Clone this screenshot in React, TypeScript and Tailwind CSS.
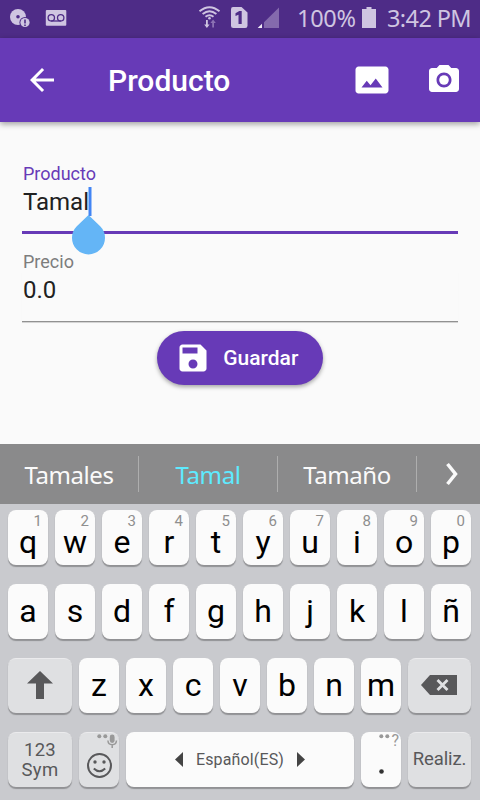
import type { ReactNode } from 'react';

const SAMSUNG = "font-['Noto_Sans','Open_Sans',sans-serif]";
const KEY = 'relative flex h-[55px] items-center justify-center rounded-[8px] shadow-[0_1.5px_1px_rgba(0,0,0,0.28)]';
const LIGHT = 'w-10 bg-[#fbfbfb] text-black';
const GREY = 'bg-[#dfe0e2] text-[#58585a] border-t border-[#ebebed]';

function Letter({ char, hint }: { char: string; hint?: string }) {
  return (
    <div className={`${KEY} ${LIGHT} text-[32px] leading-none`}>
      <span className={hint ? 'pt-[9px]' : 'pb-[2px]'}>{char}</span>
      {hint && <span className="absolute right-[6px] top-[3px] text-[15px] leading-4 text-[#8f8f8f]">{hint}</span>}
    </div>
  );
}

function Row({ children }: { children: ReactNode }) {
  return <div className="flex gap-[7px]">{children}</div>;
}

function StatusBar() {
  return (
    <div className={`flex h-[38px] shrink-0 items-center bg-[#4e2c87] text-[#cfc5e1] ${SAMSUNG}`}>
      <svg className="ml-[9px]" width="22" height="38" viewBox="9 0 22 38">
        <circle cx="18" cy="17" r="8" fill="currentColor" />
        <circle cx="18" cy="16.7" r="1.8" fill="#4e2c87" />
        <circle cx="25" cy="22.5" r="5.6" fill="#4e2c87" />
        <circle cx="25" cy="22.5" r="4.6" fill="currentColor" />
        <path d="M24.2 19.5h1.6v4h-1.6zM24.2 24.4h1.6V26h-1.6z" fill="#4e2c87" />
      </svg>
      <svg className="ml-[14px]" width="22" height="38" viewBox="45 0 22 38" fill="none" stroke="#4e2c87" strokeWidth="1.3">
        <rect x="45.8" y="10" width="20.5" height="15.7" rx="1" fill="#cfc5e1" stroke="none" />
        <circle cx="51.3" cy="17.8" r="3.2" />
        <circle cx="60.7" cy="17.8" r="3.2" />
        <path d="M51.3 21h9.4" />
      </svg>
      <svg className="ml-[131px]" width="84" height="38" viewBox="198 0 84 38">
        <g fill="none" stroke="#cfc5e1" strokeWidth="1.9">
          <path d="M199.5 11.3q10-8.2 20 0M202.6 14.1q6.9-5.6 13.8 0M205.5 16.8q4-3.2 8 0" />
        </g>
        <circle cx="209.5" cy="18.3" r="1.3" fill="#cfc5e1" />
        <path d="M206 20h1.8v4.5h1.8l-2.7 3.6-2.7-3.6h1.8z" fill="#cfc5e1" />
        <path d="M212.2 27.5h1.8V23h1.8l-2.7-3.6-2.7 3.6h1.8z" fill="#8b72b3" />
        <path d="M233 7h8.5l6 5.5v13.2q0 2.3-2.3 2.3h-11.9q-2.3 0-2.3-2.3V9.3q0-2.3 2-2.3z" fill="#cfc5e1" />
        <path d="M239.3 11h2.4v13h-3.2v-9.2l-3 1.200v-2.700z" fill="#4e2c87" />
        <path d="M279 7.5V28h-15V22.3z" fill="#846aad" />
        <path d="M262 23.8V28h-4.3z" fill="#f1edf7" />
      </svg>
      <span className="ml-[15px] w-[60px] whitespace-nowrap text-[23.5px] leading-none tracking-[-0.3px]">100%</span>
      <svg className="ml-[5px]" width="14" height="38" viewBox="0 0 14 38">
        <path d="M4.5 7h5v2H14v19H0V9h4.5z" fill="currentColor" />
      </svg>
      <span className="ml-[11px] whitespace-nowrap text-[23.5px] leading-none tracking-[-0.6px]">3:42 PM</span>
    </div>
  );
}

function AppBar() {
  return (
    <header className="relative flex h-[84px] shrink-0 items-center bg-[#673ab7] pl-6 pr-[18px] text-white shadow-[0_2px_6px_rgba(0,0,0,0.38)]">
      <svg width="36" height="36" viewBox="0 0 24 24" fill="currentColor">
        <path d="M20 11H7.83l5.59-5.59L12 4l-8 8 8 8 1.41-1.41L7.83 13H20v-2z" />
      </svg>
      <h1 className="ml-12 flex-1 pt-px text-[30px] font-medium leading-none">Producto</h1>
      <svg width="36" height="36" viewBox="0 0 24 24" fill="currentColor">
        <path d="M21 3H3C2 3 1 4 1 5v14c0 1.1.9 2 2 2h18c1 0 2-1 2-2V5c0-1-1-2-2-2zM5 17l3.5-4.5 2.5 3.01L14.5 11l4.5 6H5z" />
      </svg>
      <svg className="ml-9" width="36" height="36" viewBox="0 0 24 24" fill="currentColor">
        <circle cx="12" cy="12" r="3.2" />
        <path d="M9 2L7.17 4H4c-1.1 0-2 .9-2 2v12c0 1.1.9 2 2 2h16c1.1 0 2-.9 2-2V6c0-1.1-.9-2-2-2h-3.17L15 2H9zm3 15c-2.76 0-5-2.24-5-5s2.24-5 5-5 5 2.24 5 5-2.24 5-5 5z" />
      </svg>
    </header>
  );
}

function Form() {
  return (
    <main className="flex h-[322px] shrink-0 flex-col px-[22px] pt-[41px]">
      <label className="h-[21px] pl-[1px] text-[18px] leading-[21px] text-[#673ab7]">Producto</label>
      <div className="relative flex h-[50px] items-start border-b-[3px] border-[#673ab7] pl-[1px] pt-[3px] text-[24px] leading-[30px] text-[#212121]">
        <span>Tamal</span>
        <span className="relative h-[29px] w-[3px] -translate-x-[0.5px] bg-[#4285f4]">
          <svg className="absolute left-[-17px] top-[28px]" width="35" height="40" viewBox="0 0 35 40">
            <path d="M17 0L28.7 11.3A16.5 16.5 0 1 1 5.3 11.3z" fill="#64b5f6" />
          </svg>
        </span>
      </div>
      <label className="mt-[17px] h-[21px] pl-[1px] text-[18px] leading-[21px] text-[#7d7d7d]">Precio</label>
      <div className="h-[50px] border-b border-[#919191] pl-[1px] pt-[3px] text-[24px] leading-[30px] text-[#212121] shadow-[0_0.5px_0.5px_rgba(0,0,0,0.15)]">0.0</div>
      <button className="mt-[8.5px] flex h-[54px] w-[165.5px] items-center self-center rounded-full bg-[#673ab7] pl-[18px] text-[21px] font-medium text-white shadow-[0_2px_4px_rgba(0,0,0,0.35)]">
        <svg width="36" height="36" viewBox="0 0 24 24" fill="currentColor">
          <path d="M17 3H5c-1.11 0-2 .9-2 2v14c0 1.1.89 2 2 2h14c1.1 0 2-.9 2-2V7l-4-4zm-5 16c-1.66 0-3-1.34-3-3s1.34-3 3-3 3 1.34 3 3-1.34 3-3 3zm3-10H5V5h10v4z" />
        </svg>
        <span className="ml-3 pt-[2px]">Guardar</span>
      </button>
    </main>
  );
}

function Suggestions() {
  return (
    <div className={`flex h-[60px] shrink-0 items-center bg-[#8a8a8b] text-[24px] tracking-[-0.4px] text-[#fafafa] ${SAMSUNG}`}>
      <span className="w-[138px] pt-[2px] text-center">Tamales</span>
      <i className="h-9 w-px bg-[#aeaeae]" />
      <span className="w-[138px] pt-[2px] text-center text-[#5eeaff]">Tamal</span>
      <i className="h-9 w-px bg-[#aeaeae]" />
      <span className="w-[138px] pt-[2px] text-center">Tamaño</span>
      <i className="h-9 w-px bg-[#aeaeae]" />
      <svg className="ml-[27px]" width="16" height="26" viewBox="0 0 16 26">
        <path d="M3.500 3l8 10-8 10" fill="none" stroke="currentColor" strokeWidth="3.500" />
      </svg>
    </div>
  );
}

function Keyboard() {
  return (
    <div className="flex h-[296px] shrink-0 flex-col gap-[19px] bg-[#c9cace] px-2 pt-[6px]">
      <Row>
        {[...'qwertyuiop'].map((c, i) => <Letter key={c} char={c} hint={String((i + 1) % 10)} />)}
      </Row>
      <Row>{[...'asdfghjklñ'].map((c) => <Letter key={c} char={c} />)}</Row>
      <Row>
        <div className={`${KEY} ${GREY} w-16`}>
          <svg className="-mt-[2px]" width="26" height="28" viewBox="0 0 26 28" fill="currentColor"><path d="M13 0l13 12.5h-9V28H9V12.5H0z" /></svg>
        </div>
        {[...'zxcvbnm'].map((c) => <Letter key={c} char={c} />)}
        <div className={`${KEY} ${GREY} w-[63px]`}>
          <svg className="-mt-[3px] -ml-[2px]" width="36" height="20" viewBox="0 0 36 20">
            <path d="M0 10L9 0h27v20H9z" fill="#58585a" />
            <path d="M16.5 5l10 10m0-10l-10 10" stroke="#dfe0e2" strokeWidth="2.8" />
          </svg>
        </div>
      </Row>
      <Row>
        <div className={`${KEY} ${GREY} w-16 flex-col text-[18.5px] leading-[20.5px] tracking-[0.3px]`}>
          <span>123</span>
          <span>Sym</span>
        </div>
        <div className={`${KEY} ${GREY} w-10`}>
          <svg className="-mt-px" width="40" height="55" viewBox="79 732 40 55" fill="none" stroke="#58585a">
            <circle cx="99.5" cy="765.5" r="11.5" strokeWidth="2" />
            <path d="M93.8 768.5q5.700 5.500 11.400 0" strokeWidth="2" />
            <circle cx="95" cy="762" r="1.7" fill="#58585a" stroke="none" />
            <circle cx="104" cy="762" r="1.7" fill="#58585a" stroke="none" />
            <g fill="#999" stroke="none">
              <circle cx="99.3" cy="736.3" r="2" />
              <circle cx="105.3" cy="736.3" r="2" />
              <rect x="109.8" y="734.5" width="4.8" height="8.5" rx="2.4" />
            </g>
            <path d="M107.900 740.500q.300 4.200 4.300 4.200t4.300-4.200M112.200 744.500v3.500" stroke="#999" strokeWidth="1.5" />
          </svg>
        </div>
        <div className={`${KEY} w-[228px] bg-[#fbfbfb] text-[16px] text-[#58585a]`}>
          <svg width="8" height="15" viewBox="0 0 8 15" fill="#444"><path d="M8 0v15L0 7.5z" /></svg>
          <span className="mx-[13px] tracking-[0.15px]">Español(ES)</span>
          <svg width="8" height="15" viewBox="0 0 8 15" fill="#444"><path d="M0 0v15l8-7.5z" /></svg>
        </div>
        <div className={`${KEY} ${LIGHT}`}>
          <svg className="absolute left-[18px] top-[2px]" width="12" height="5" viewBox="0 0 12 5" fill="#999">
            <circle cx="2.3" cy="2.3" r="2" />
            <circle cx="8.3" cy="2.3" r="2" />
          </svg>
          <span className="absolute right-[2px] top-px text-[16px] leading-4 text-[#999]">?</span>
          <svg className="mt-[23px]" width="5" height="5" viewBox="0 0 5 5" fill="#333"><circle cx="2.5" cy="2.5" r="2.3" /></svg>
        </div>
        <div className={`${KEY} ${GREY} w-[63px] pb-px text-[18.5px] tracking-[-0.1px]`}>Realiz.</div>
      </Row>
    </div>
  );
}

export default function App() {
  return (
    <div className="flex h-[800px] w-[480px] flex-col overflow-hidden bg-[#fafafa] font-[Roboto,sans-serif]">
      <StatusBar />
      <AppBar />
      <Form />
      <Suggestions />
      <Keyboard />
    </div>
  );
}
